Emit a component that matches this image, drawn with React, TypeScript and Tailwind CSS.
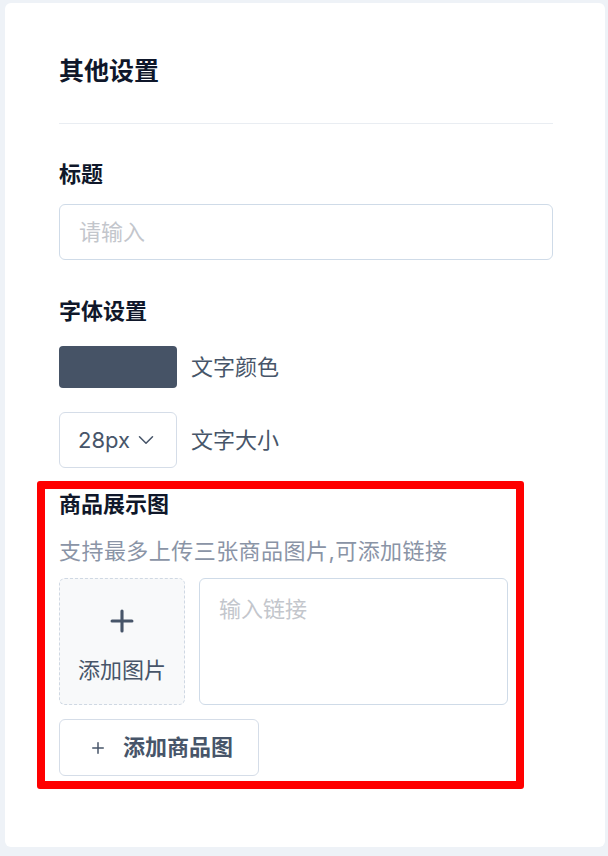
import { ChevronDown, Plus } from "lucide-react";

const FONT = { fontFamily: 'Inter, "Noto Sans CJK SC", sans-serif' };

export default function App() {
  return (
    <div className="min-h-[856px] w-[608px] bg-[#eef2f7] pt-[3px] pl-[5px]" style={FONT}>
      <div className="relative h-[844px] w-[600px] rounded-[6px] bg-white pl-[54px] pr-[52px] pt-[51px]">
        <div className="flex h-[36px] items-center text-[25px] font-bold text-[#0f172a]">其他设置</div>
        <div className="mt-[33px] h-px bg-[#e9edf2]" />

        <div className="mt-[35px] flex h-[30px] items-center text-[22px] font-bold text-[#0f172a]">标题</div>
        <div className="mt-[15px] flex h-[56px] items-center rounded-[6px] border border-[#cfdbe8] px-[19px] text-[22px] text-[#c3c6cc]">
          请输入
        </div>

        <div className="mt-[36px] flex h-[30px] items-center text-[22px] font-bold text-[#0f172a]">字体设置</div>
        <div className="mt-[20px] flex items-center gap-[14px]">
          <div className="h-[42px] w-[118px] rounded-[4px] bg-[#465366]" />
          <span className="text-[22px] text-[#475569]">文字颜色</span>
        </div>
        <div className="mt-[24px] flex items-center gap-[14px]">
          <div className="flex h-[56px] w-[118px] items-center gap-[3px] rounded-[6px] border border-[#d5dde8] pl-[18px] text-[22px] text-[#475569]">
            <span>28px</span>
            <ChevronDown size={26} strokeWidth={1.4} />
          </div>
          <span className="text-[22px] text-[#475569]">文字大小</span>
        </div>

        <div className="mt-[21px] flex h-[30px] items-center text-[22px] font-bold text-[#0f172a]">商品展示图</div>
        <div className="mt-[17px] flex h-[30px] items-center text-[22px] tracking-[0.45px] text-[#8a94a6]">
          支持最多上传三张商品图片,可添加链接
        </div>
        <div className="mt-[12px] flex gap-[14px]">
          <div className="flex h-[127px] w-[126px] flex-col items-center rounded-[6px] border border-dashed border-[#cfd8e3] bg-[#f8f9fa] pt-[25px] text-[#475569]">
            <Plus size={34} strokeWidth={2.2} />
            <span className="mt-[16px] text-[22px]">添加图片</span>
          </div>
          <div className="h-[127px] w-[309px] rounded-[6px] border border-[#cfdbe8] px-[19px] pt-[14px] text-[22px] text-[#c3c6cc]">
            输入链接
          </div>
        </div>
        <div className="mt-[14px] flex h-[57px] w-[200px] items-center gap-[16px] rounded-[6px] border border-[#d5dde8] pl-[29px] text-[22px] font-bold text-[#475569]">
          <Plus size={18} strokeWidth={2} />
          <span>添加商品图</span>
        </div>

        <div className="pointer-events-none absolute left-[32px] top-[478px] h-[308px] w-[487px] rounded-[3px] border-[8px] border-[#ff0000]" />
      </div>
    </div>
  );
}
